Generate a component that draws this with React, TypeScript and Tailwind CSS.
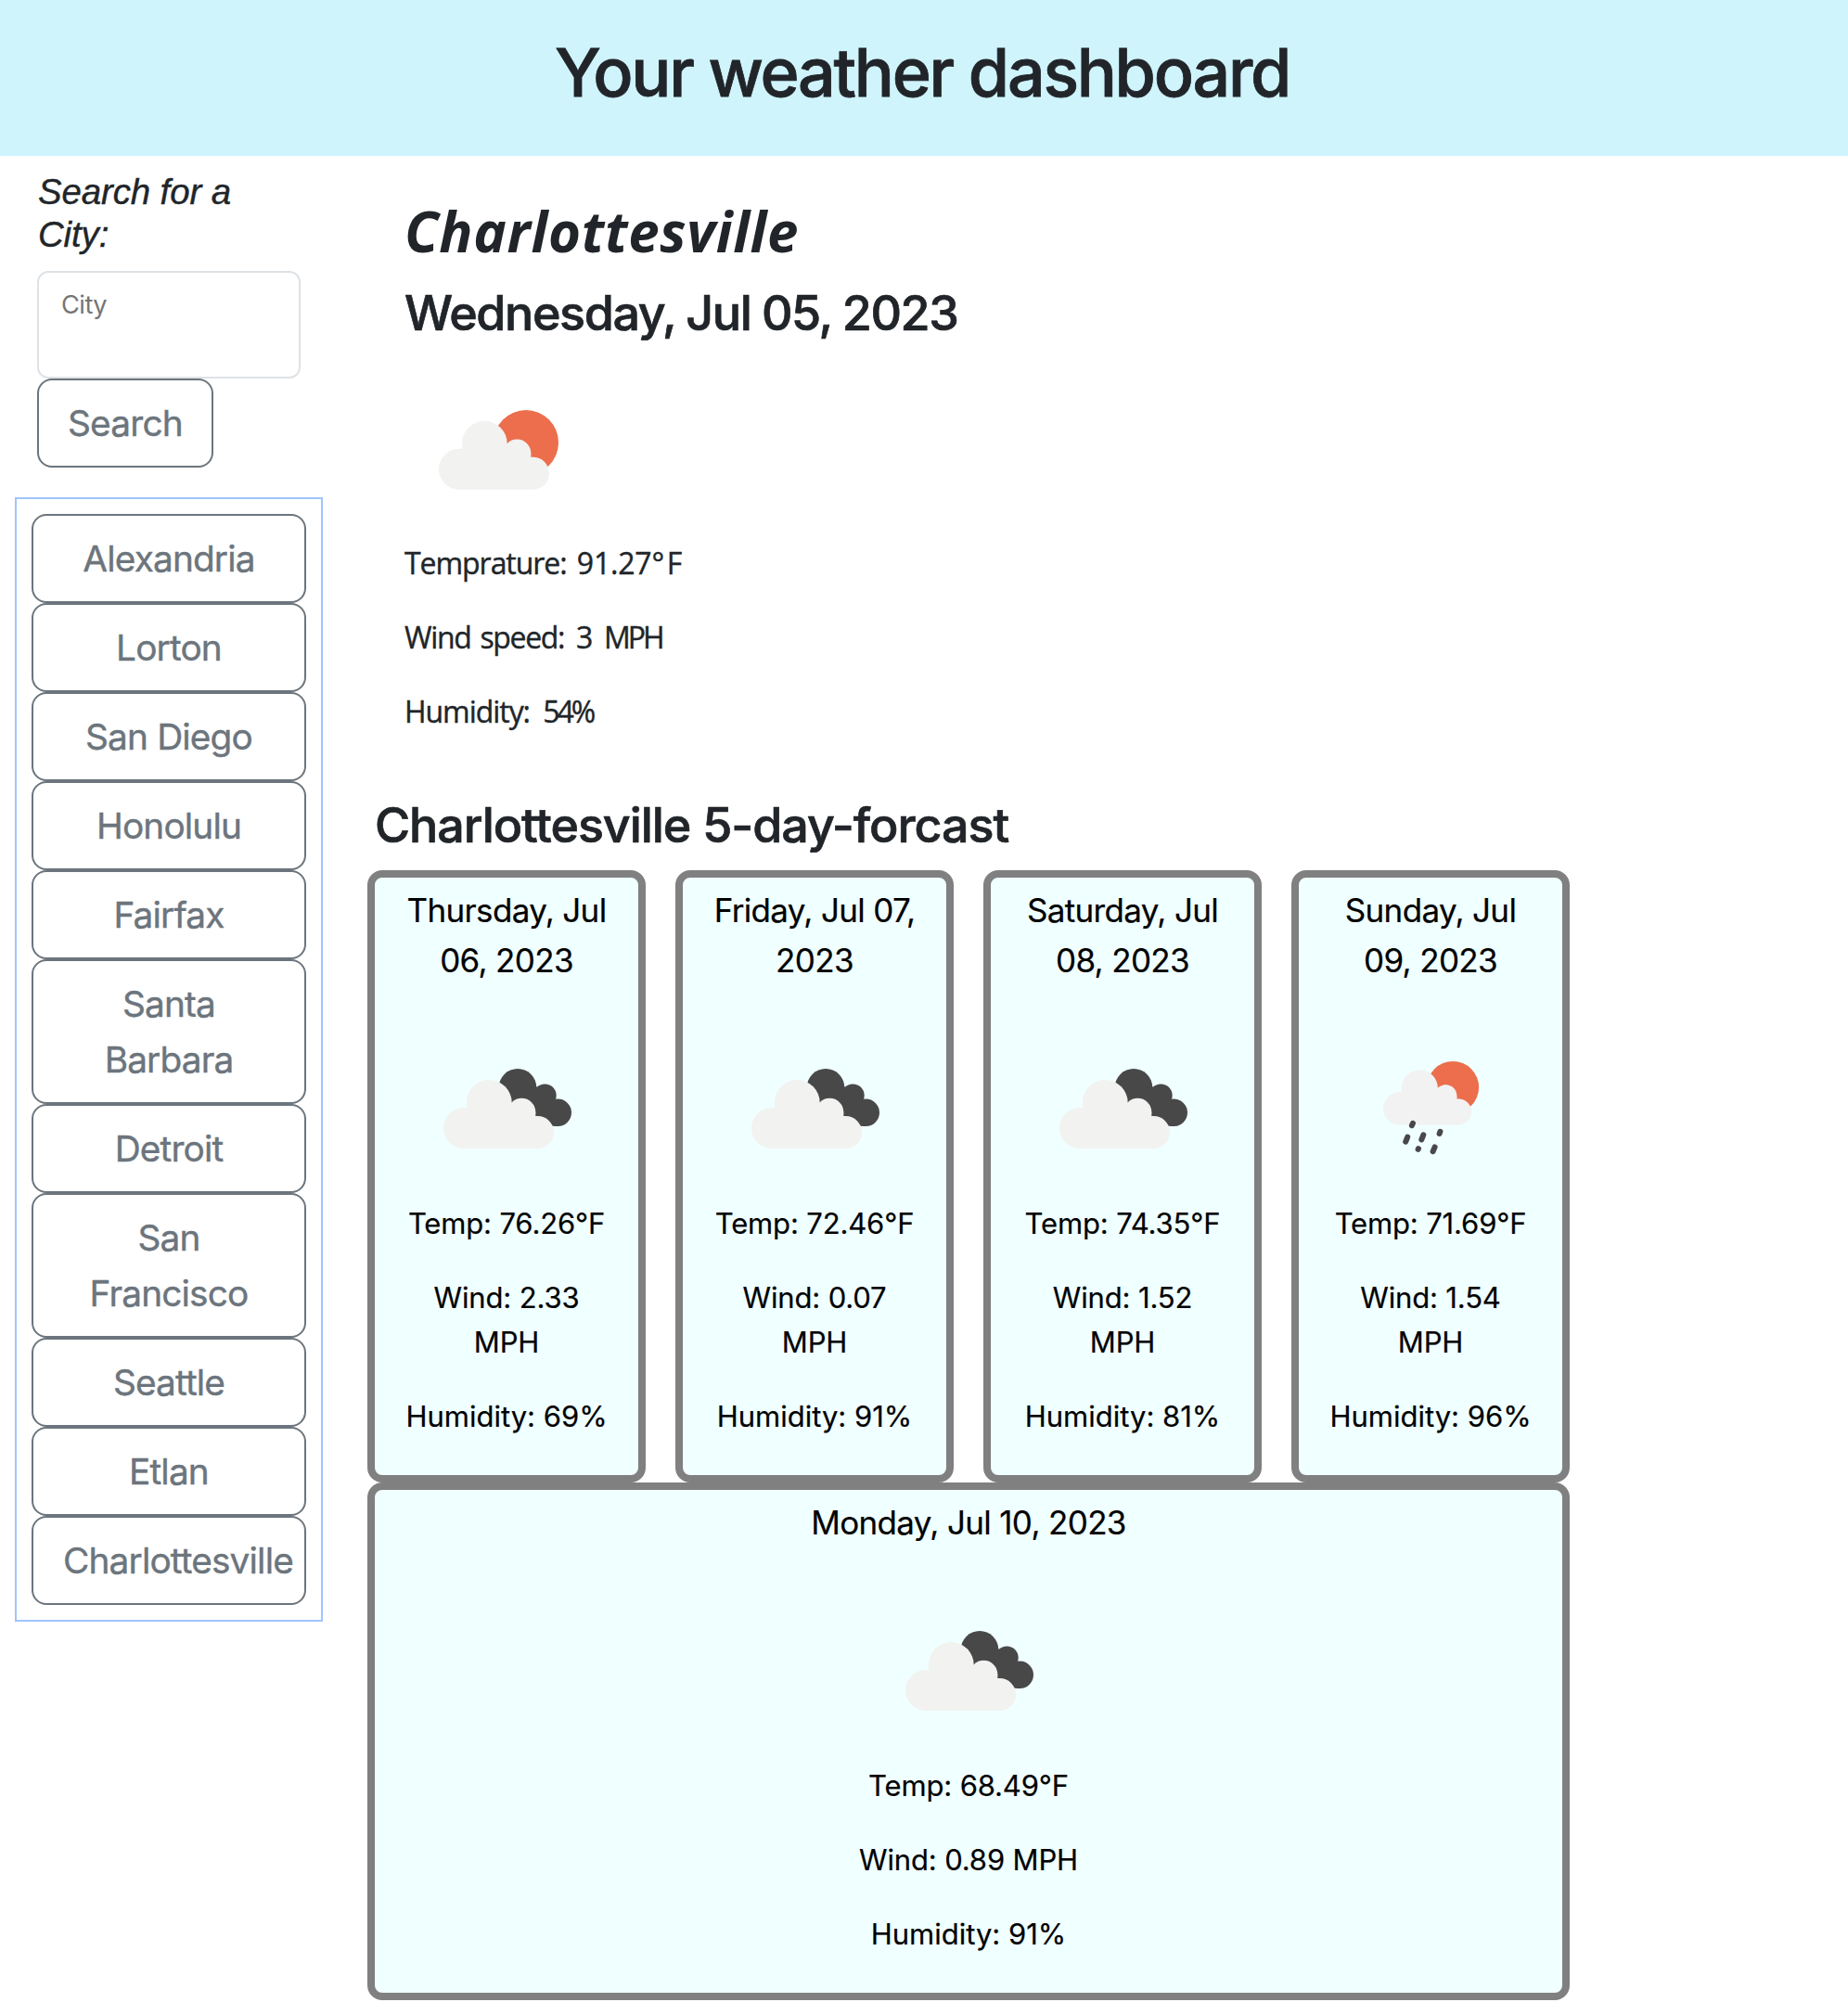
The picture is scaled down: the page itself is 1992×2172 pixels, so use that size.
import type { ReactNode } from "react";

type IconKind = "clouds" | "sun" | "rain";

const cities = [
  "Alexandria",
  "Lorton",
  "San Diego",
  "Honolulu",
  "Fairfax",
  "Santa Barbara",
  "Detroit",
  "San Francisco",
  "Seattle",
  "Etlan",
  "Charlottesville",
];

const days: { date: string; icon: IconKind; temp: string; wind: string; humidity: string }[] = [
  { date: "Thursday, Jul 06, 2023", icon: "clouds", temp: "76.26", wind: "2.33", humidity: "69" },
  { date: "Friday, Jul 07, 2023", icon: "clouds", temp: "72.46", wind: "0.07", humidity: "91" },
  { date: "Saturday, Jul 08, 2023", icon: "clouds", temp: "74.35", wind: "1.52", humidity: "81" },
  { date: "Sunday, Jul 09, 2023", icon: "rain", temp: "71.69", wind: "1.54", humidity: "96" },
  { date: "Monday, Jul 10, 2023", icon: "clouds", temp: "68.49", wind: "0.89", humidity: "91" },
];

function CloudShape() {
  return (
    <>
      <circle cx="54" cy="154" r="22" />
      <circle cx="81.3" cy="126.5" r="24.4" />
      <circle cx="116.3" cy="136.8" r="15" />
      <circle cx="133.5" cy="158.5" r="17.5" />
      <path d="M54 132H80L105 128L116 122L131.3 136.8V141.2L134 141V176H54Z" />
    </>
  );
}

function SunCloud({ fill }: { fill: string }) {
  return (
    <>
      <circle cx="126" cy="125.3" r="35" fill="#ec6e4c" />
      <g fill={fill}>
        <CloudShape />
      </g>
    </>
  );
}

function DarkClouds() {
  return (
    <g fill="#484849">
      <circle cx="112" cy="110.3" r="20.3" />
      <circle cx="141.3" cy="118.8" r="12.4" />
      <circle cx="155.3" cy="137.3" r="14.7" />
      <path d="M112 110L132 109L142 118L153.5 123L155 152L120 150L100 126Z" />
    </g>
  );
}

function WeatherIcon({ kind }: { kind: IconKind }) {
  return (
    <svg width="200" height="232" viewBox="0 0 200 232" className="mx-auto block">
      {kind === "clouds" && (
        <>
          <DarkClouds />
          <g fill="#f2f2f0">
            <CloudShape />
          </g>
        </>
      )}
      {kind === "rain" && (
        <>
          <g transform="translate(23.3 9.7) scale(0.8)">
            <SunCloud fill="#f2f2f2" />
          </g>
          <g stroke="#48484a" strokeWidth="6" strokeLinecap="round" fill="none">
            <path d="M79.9 151.2L80.9 148.8" />
            <path d="M73.2 168.6L75.2 163.6" />
            <path d="M90.3 166.4L92.3 161.4" />
            <path d="M109.6 160L110.4 157.8" />
            <path d="M86.6 176.8L86.9 176.2" />
            <path d="M102.6 179.2L104.6 174.4" />
          </g>
        </>
      )}
    </svg>
  );
}

function CityButton({ children }: { children: ReactNode }) {
  return (
    <button className="rounded-2xl border-2 border-[#6c757d] px-8 py-4 text-[38.8px] leading-[60px] tracking-[-0.85px] text-[#6c757d] [-webkit-text-stroke:0.4px_#6c757d]">
      {children}
    </button>
  );
}

function Card({ day, className }: { day: (typeof days)[number]; className: string }) {
  return (
    <article
      className={
        "rounded-2xl border-8 border-[#808080] bg-[#f0ffff] px-8 py-2 text-center text-black [-webkit-text-stroke:0.2px_#000] " +
        className
      }
    >
      <h3 className="text-[35px] leading-[54px] tracking-[-0.65px]">{day.date}</h3>
      <WeatherIcon kind={day.icon} />
      <div className="flex flex-col gap-8 pt-px pb-[31px] text-[31px] leading-[48px] tracking-[-0.15px]">
        <p>Temp: {day.temp}°F</p>
        <p>Wind: {day.wind} MPH</p>
        <p className="tracking-[0px]">Humidity: {day.humidity}%</p>
      </div>
    </article>
  );
}

export default function App() {
  return (
    <div className="min-h-[2172px] w-full bg-white font-['Inter',sans-serif] text-[#212529]">
      <header className="h-[168px] bg-[#cff4fc] pt-[34px] text-center">
        <h1 className="pr-1 text-[71.7px] leading-[88px] font-medium tracking-[-2.25px] [-webkit-text-stroke:0.8px_#212529]">
          Your weather dashboard
        </h1>
      </header>
      <div className="flex">
        <aside className="w-[348px] shrink-0 pt-4 pl-4">
          <div className="pl-6">
            <label className="block w-[240px] pl-px font-['Liberation_Sans',sans-serif] text-[38.4px] leading-[46px] italic tracking-[-0.1px] [-webkit-text-stroke:0.4px_#212529]">
              Search for a City:
            </label>
            <textarea
              placeholder="City"
              className="mt-4 block h-[116px] w-[284px] resize-none overflow-hidden rounded-xl border-2 border-[#dee2e6] px-6 py-[14px] text-[27.2px] leading-[42px] tracking-[-0.5px] placeholder:text-[#757575]"
            />
            <button className="block h-24 w-[190px] rounded-2xl border-2 border-[#6c757d] text-[38.8px] leading-[60px] tracking-[-0.8px] text-[#6c757d] [-webkit-text-stroke:0.4px_#6c757d]">
              Search
            </button>
          </div>
          <nav className="mt-8 flex w-[332px] flex-col border-2 border-[#9ec5fe] p-4">
            {cities.map((c) => (
              <CityButton key={c}>{c}</CityButton>
            ))}
          </nav>
        </aside>
        <main className="ml-12 w-[1296px]">
          <section className="pt-[45px] pl-10">
            <h2 className="font-['Open_Sans',sans-serif] text-[60px] leading-[72px] font-bold italic tracking-[0.65px]">
              Charlottesville
            </h2>
            <h3 className="mt-[21px] text-[52px] leading-[64px] font-medium tracking-[-1.4px] [-webkit-text-stroke:0.7px_#212529] [word-spacing:-1px]">
              Wednesday, Jul 05, 2023
            </h3>
            <svg width="200" height="212" viewBox="0 0 200 212" className="block">
              <g transform="translate(5 -18.3)">
                <SunCloud fill="#f2f2f0" />
              </g>
            </svg>
            <div className="flex flex-col gap-8 pt-px font-['Open_Sans',sans-serif] text-[32px] leading-[48px] [-webkit-text-stroke:0.4px_#212529]">
              <p className="tracking-[-1.05px] [word-spacing:4px]">
                Temprature: <span className="tracking-[-0.2px]">91.27</span>
                <span className="tracking-[2.5px]">°</span>F
              </p>
              <p className="tracking-[-1.35px] [word-spacing:3px]">
                Wind speed:<span className="[word-spacing:6px]"> 3 </span>
                <span className="tracking-[-3px]">MPH</span>
              </p>
              <p className="tracking-[-1.05px] [word-spacing:7px]">
                Humidity: <span className="tracking-[-3px]">54%</span>
              </p>
            </div>
          </section>
          <section>
            <h2 className="mt-[67px] pl-[8px] text-[52px] leading-[64px] font-medium tracking-[-1.05px] [-webkit-text-stroke:0.7px_#212529]">
              Charlottesville 5-day-forcast
            </h2>
            <div className="mt-4 grid grid-cols-4 gap-x-8">
              {days.map((d, i) => (
                <Card key={d.date} day={d} className={i === 4 ? "col-span-4" : ""} />
              ))}
            </div>
          </section>
        </main>
      </div>
    </div>
  );
}
